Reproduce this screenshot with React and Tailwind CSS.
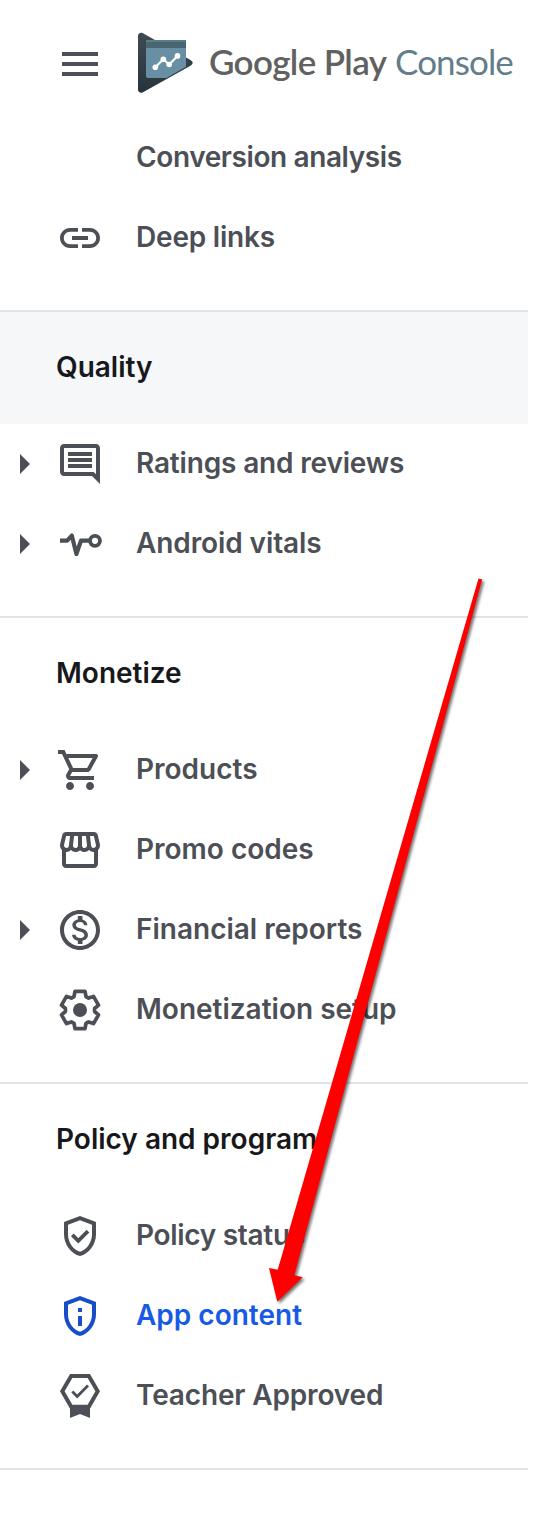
import {
  MdLink,
  MdOutlineComment,
  MdOutlineShoppingCart,
  MdOutlineStorefront,
  MdOutlineMonetizationOn,
  MdOutlineShield,
} from "react-icons/md";

function VitalsIcon() {
  return (
    <svg viewBox="0 0 48 48" className="size-12" fill="none" stroke="currentColor" strokeLinejoin="round">
      <path d="M4 20.600h7.200L15.800 15.600 20.400 34 25 20.600H33" strokeWidth="4.200" />
      <circle cx="39" cy="20.800" r="5" strokeWidth="3.800" />
    </svg>
  );
}

function SettingsIcon() {
  return (
    <svg viewBox="-24 -24 48 48" className="size-12" fill="none" stroke="currentColor" strokeLinejoin="round">
      <path
        d="M-6-13.400L-5-18.600H5L6-13.400 8.600-11.900 13.500-13.600 18.500-4.900 14.600-1.500V1.500L18.500 4.900 13.500 13.600 8.600 11.900 6 13.400 5 18.600H-5L-6 13.400-8.600 11.900-13.500 13.600-18.500 4.900-14.600 1.500V-1.500L-18.500-4.900-13.500-13.600-8.600-11.900z"
        strokeWidth="3.700"
      />
      <circle r="7" fill="currentColor" stroke="none" />
    </svg>
  );
}

function ShieldCheckIcon() {
  return (
    <div className="relative size-12">
      <MdOutlineShield className="size-12" />
      <svg viewBox="0 0 48 48" className="absolute inset-0 size-12" fill="none" stroke="currentColor" strokeWidth="3.800">
        <path d="M16.300 22.800l6 6L32 19.100" />
      </svg>
    </div>
  );
}

function ShieldInfoIcon() {
  return (
    <div className="relative size-12 text-[#174dc9]">
      <MdOutlineShield className="size-12" />
      <svg viewBox="0 0 48 48" className="absolute inset-0 size-12" fill="currentColor">
        <path d="M22 16h4v4h-4zM22 24h4v10h-4z" />
      </svg>
    </div>
  );
}

function TeacherIcon() {
  return (
    <svg viewBox="0 0 48 48" className="size-12" fill="none" stroke="currentColor">
      <path d="M15.200 4h17.600l8.900 15.300-8.900 15.400H15.200L6.300 19.300z" strokeWidth="4" />
      <path d="M16.300 19.500l4.900 4.900L32 13.600" strokeWidth="2.800" />
      <path d="M14 33h20v13l-10-4-10 4z" fill="currentColor" stroke="none" />
    </svg>
  );
}

function Logo() {
  return (
    <svg viewBox="0 0 56 62" className="h-[62px] w-14">
      <defs>
        <linearGradient id="play" x1="0" y1="0" x2="0" y2="1">
          <stop offset="0" stopColor="#3f4b51" />
          <stop offset="1" stopColor="#28343b" />
        </linearGradient>
        <clipPath id="edge">
          <path d="M0 0h48v34.700L28.500 46 24 62H0z" />
        </clipPath>
      </defs>
      <path
        d="M0 4C0 1.400 2.600 0 5 1.300L52.500 28Q57 30.800 52.500 33.700L5 60.200C2.600 61.600 0 60.200 0 57.600z"
        fill="url(#play)"
      />
      <g clipPath="url(#edge)">
        <path d="M8 8h40v38H10a2 2 0 0 1-2-2z" fill="#688fa3" />
        <path d="M8 8h40v8H8z" fill="#486672" />
        <path d="M8 8h40v2H8z" fill="#5c7c8a" />
      </g>
      <path d="M17.300 35.200L25.300 27.200 31.200 32.500 39.500 23.900" fill="none" stroke="#fff" strokeWidth="2.200" />
      <g fill="#fff">
        <circle cx="17.300" cy="35.200" r="2.800" />
        <circle cx="25.300" cy="27.200" r="2.800" />
        <circle cx="31.200" cy="32.500" r="2.800" />
        <circle cx="39.500" cy="23.900" r="2.800" />
      </g>
    </svg>
  );
}

function Item({ label, icon, expandable, tone = "", tracking = "" }) {
  return (
    <li className="flex h-20 items-center pl-5">
      <span className="w-9">
        {expandable && (
          <svg viewBox="0 0 10 20" className="h-5 w-2.5" fill="currentColor">
            <path d="M0 0l10 10L0 20z" />
          </svg>
        )}
      </span>
      <span className="mr-8 size-12">{icon}</span>
      <span className={`pb-0.5 ${tone} ${tracking}`}>{label}</span>
    </li>
  );
}

function Section({ title, items, shaded }) {
  return (
    <section className="border-b-2 border-[#e0e4e8] pb-8">
      {title && (
        <h2 className={`flex h-28 items-center pb-0.5 pl-14 text-[#17181b] ${shaded ? "bg-[#f5f7f9]" : ""}`}>{title}</h2>
      )}
      <ul>
        {items.map((item) => (
          <Item key={item.label} {...item} />
        ))}
      </ul>
    </section>
  );
}

const sections = [
  {
    items: [
      { label: "Conversion analysis", tracking: "tracking-[-0.4px]" },
      { label: "Deep links", icon: <MdLink className="size-12" />, tracking: "tracking-[-0.2px]" },
    ],
  },
  {
    title: "Quality",
    shaded: true,
    items: [
      {
        label: "Ratings and reviews",
        icon: <MdOutlineComment className="size-12" />,
        expandable: true,
        tracking: "tracking-[-0.17px]",
      },
      { label: "Android vitals", icon: <VitalsIcon />, expandable: true, tracking: "tracking-[-0.1px]" },
    ],
  },
  {
    title: "Monetize",
    items: [
      { label: "Products", icon: <MdOutlineShoppingCart className="size-12" />, expandable: true },
      { label: "Promo codes", icon: <MdOutlineStorefront className="size-12" /> },
      { label: "Financial reports", icon: <MdOutlineMonetizationOn className="size-12" />, expandable: true },
      { label: "Monetization setup", icon: <SettingsIcon /> },
    ],
  },
  {
    title: "Policy and program",
    items: [
      { label: "Policy status", icon: <ShieldCheckIcon />, tracking: "tracking-[-0.3px]" },
      { label: "App content", icon: <ShieldInfoIcon />, tone: "text-[#185ae6]" },
      { label: "Teacher Approved", icon: <TeacherIcon />, tracking: "tracking-[-0.15px]" },
    ],
  },
];

export default function App() {
  return (
    <div className="relative h-[1520px] w-[554px] overflow-hidden bg-white font-['Inter',sans-serif] text-[28px] leading-10 font-[560] whitespace-nowrap text-[#4c4f55]">
      <header className="flex h-[118px] items-start pt-8 pl-[62px]">
        <div className="mt-5 mr-10 flex w-9 flex-col gap-1.5">
          <span className="h-1 bg-current" />
          <span className="h-1 bg-current" />
          <span className="h-1 bg-current" />
        </div>
        <Logo />
        <div className="ml-[15px] flex pt-[9px] font-['Lato',sans-serif] text-[35px]">
          <span className="w-[186px] font-semibold tracking-[-0.65px] text-[#616161]">Google Play</span>
          <span className="font-normal tracking-[-0.9px] text-[#627d8b]">Console</span>
        </div>
      </header>
      <nav className="w-[528px]">
        {sections.map((section, i) => (
          <Section key={i} {...section} />
        ))}
      </nav>
      <svg viewBox="0 0 554 1520" className="pointer-events-none absolute inset-0 h-[1520px] w-[554px]">
        <path
          d="M478.500 578.500L482.200 579.500 294.300 1275.300 302.700 1277.300 277.300 1301.700 269 1268 277.700 1269.700z"
          fill="#fe0000"
          className="drop-shadow-[2px_2px_1.500px_rgba(0,0,0,0.55)]"
        />
      </svg>
    </div>
  );
}
